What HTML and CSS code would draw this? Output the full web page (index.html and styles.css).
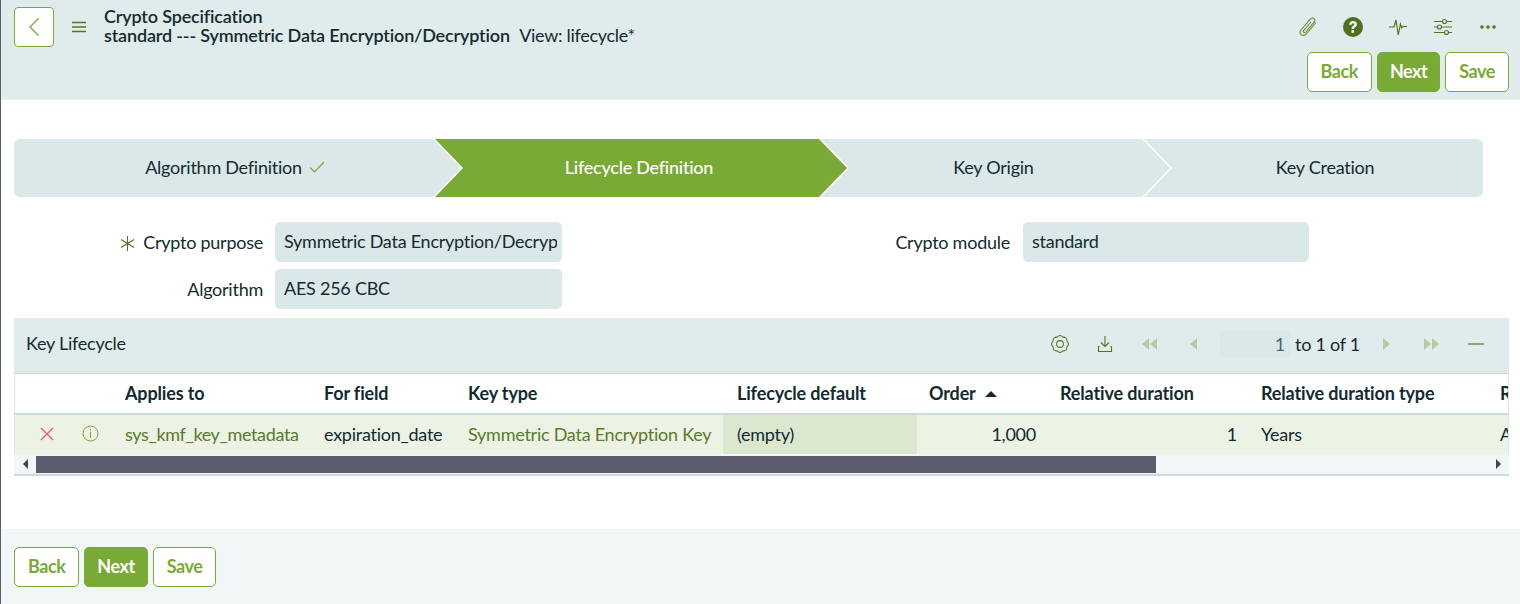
FILE: index.html
```html
<!DOCTYPE html>
<html lang="en">
<head>
    <meta charset="UTF-8">
    <meta name="viewport" content="width=device-width, initial-scale=1.0">
    <title>Crypto Specification</title>
    <link rel="stylesheet" href="styles.css">
</head>
<body>
    <header class="topbar">
        <div class="topbar-row">
            <button class="back-arrow" type="button">
                <svg width="12" height="20" viewBox="0 0 12 20"><path d="M10.5 1.5 2 10l8.500 8.500" fill="none" stroke="#7aaa36" stroke-width="1.300"/></svg>
            </button>
            <svg class="menu-icon" width="14" height="12" viewBox="0 0 14 12"><path d="M0 1.500h14M0 6h14M0 10.500h14" stroke="#55761f" stroke-width="1.300"/></svg>
            <div class="title">
                <div class="title-line">Crypto Specification</div>
                <div class="title-line">standard --- Symmetric Data Encryption/Decryption <span class="view-name">View: lifecycle*</span></div>
            </div>
            <div class="top-icons">
                <svg width="20" height="20" viewBox="0 0 20 20"><path d="M18 5.500 8.300 16.800c-1.500 1.800-3.700 2.100-5.100.9s-1.400-3.400.1-5.200L12.200 2.200c1.100-1.300 2.800-1.500 3.800-.6s1 2.500-.1 3.800L7.700 15c-.6.700-1.400.9-2 .4s-.5-1.300.1-2L13 5" fill="none" stroke="#6d8a3a" stroke-width="1.100"/></svg>
                <svg width="20" height="20" viewBox="0 0 20 20"><circle cx="10" cy="10" r="10" fill="#4f701c"/><path d="M6.200 7.800c0-2.300 1.700-3.700 3.900-3.700s3.800 1.300 3.800 3.200c0 2.700-2.900 2.700-2.900 4.700H8.600c0-3.300 2.700-3.300 2.700-4.700 0-.7-.5-1.100-1.300-1.100s-1.300.6-1.300 1.600zM8.500 13.300h2.500v2.500H8.500z" fill="#fff"/></svg>
                <svg width="20" height="20" viewBox="0 0 20 20"><path d="M1 10h5l2-7 2.200 15L12.500 7l1.300 4 1-1.500H19" fill="none" stroke="#55761f" stroke-width="1.200"/></svg>
                <svg width="20" height="18" viewBox="0 0 20 18"><g fill="none" stroke="#55761f" stroke-width="1.100"><path d="M1 3.500h8.500M13.500 3.500H19M1 9h3.500M8.500 9H19M1 14.500h10.500M15.500 14.500H19"/><circle cx="11.500" cy="3.500" r="2"/><circle cx="6.500" cy="9" r="2"/><circle cx="13.500" cy="14.500" r="2"/></g></svg>
                <svg width="20" height="4" viewBox="-2 0 20 4"><g fill="#55761f"><circle cx="2" cy="2" r="1.800"/><circle cx="8" cy="2" r="1.800"/><circle cx="14" cy="2" r="1.800"/></g></svg>
            </div>
        </div>
        <div class="actions actions-right">
            <button class="btn" type="button">Back</button>
            <button class="btn btn-primary" type="button">Next</button>
            <button class="btn" type="button">Save</button>
        </div>
    </header>

    <main class="content">
        <div class="steps">
            <div class="step step-first">Algorithm Definition
                <svg class="check" width="16" height="12" viewBox="0 0 16 12"><path d="M1 6.500 5.500 11 15 1" fill="none" stroke="#7aaa36" stroke-width="1.200"/></svg>
            </div>
            <div class="step step-active">Lifecycle Definition</div>
            <div class="step">Key Origin</div>
            <div class="step step-last">Key Creation</div>
        </div>

        <div class="form">
            <div class="form-col">
                <div class="form-group">
                    <label class="form-label">
                        <svg class="required" width="15" height="15" viewBox="0 0 15 15"><path d="M7.500 0v15M1 3.500l13 8M14 3.500l-13 8" stroke="#5f6b2c" stroke-width="1.100"/></svg>Crypto purpose</label>
                    <div class="field"><div class="field-text">Symmetric Data Encryption/Decryption</div></div>
                </div>
                <div class="form-group">
                    <label class="form-label">Algorithm</label>
                    <div class="field"><div class="field-text">AES 256 CBC</div></div>
                </div>
            </div>
            <div class="form-col form-col-right">
                <div class="form-group">
                    <label class="form-label">Crypto module</label>
                    <div class="field"><div class="field-text">standard</div></div>
                </div>
            </div>
        </div>

        <section class="list">
            <div class="list-bar">
                <div class="list-title">Key Lifecycle</div>
                <div class="list-tools">
                    <svg class="tool tool-gear" width="18" height="18" viewBox="1 1 16 16"><g fill="none" stroke="#55761f" stroke-width=".9"><path d="M15.100 6.470Q15.360 2.640 11.530 2.900Q9 0 6.470 2.900Q2.640 2.640 2.900 6.470Q0 9 2.900 11.530Q2.640 15.360 6.470 15.100Q9 18 11.530 15.100Q15.360 15.360 15.100 11.530Q18 9 15.100 6.470Z"/><circle cx="9" cy="9" r="3"/></g></svg>
                    <svg class="tool tool-save" width="16" height="18" viewBox="0 0 16 18"><g fill="none" stroke="#55761f" stroke-width="1.100"><path d="M8 1v10M4 7.500l4 4 4-4"/><path d="M2.500 11.500H1.500v5h13v-5h-1"/></g></svg>
                    <svg class="tool tool-first" width="17" height="12" viewBox="0 0 17 12"><path d="M8 0v12L1 6zM16 0v12L9 6z" fill="#b5cba6"/></svg>
                    <svg class="tool tool-prev" width="9" height="12" viewBox="0 0 9 12"><path d="M8 0v12L1 6z" fill="#b5cba6"/></svg>
                    <div class="page-box">1</div>
                    <div class="page-text">to 1 of 1</div>
                    <svg class="tool tool-next" width="9" height="12" viewBox="0 0 9 12"><path d="M1 0v12l7-6z" fill="#b5cba6"/></svg>
                    <svg class="tool tool-last" width="17" height="12" viewBox="0 0 17 12"><path d="M1 0v12l7-6zM9 0v12l7-6z" fill="#b5cba6"/></svg>
                    <svg class="tool tool-min" width="16" height="2" viewBox="0 0 16 2"><path d="M0 1h16" stroke="#55761f" stroke-width="1.200"/></svg>
                </div>
            </div>
            <div class="table-wrap">
                <table class="grid">
                    <colgroup>
                        <col class="c-x"><col class="c-info"><col class="c-applies"><col class="c-field"><col class="c-key">
                        <col class="c-default"><col class="c-order"><col class="c-dur"><col class="c-type"><col class="c-rest">
                    </colgroup>
                    <thead>
                        <tr>
                            <th></th>
                            <th></th>
                            <th>Applies to</th>
                            <th>For field</th>
                            <th>Key type</th>
                            <th class="pad-wide">Lifecycle default</th>
                            <th>Order <span class="sort-up"></span></th>
                            <th>Relative duration</th>
                            <th>Relative duration type</th>
                            <th>R</th>
                        </tr>
                    </thead>
                    <tbody>
                        <tr>
                            <td class="icon-cell icon-delete"><svg width="14" height="14" viewBox="0 0 14 14"><path d="M1 1l12 12M13 1 1 13" stroke="#f0566a" stroke-width="1.300"/></svg></td>
                            <td class="icon-cell"><svg width="17" height="17" viewBox="0 0 17 17"><circle cx="8.500" cy="8.500" r="7.500" fill="none" stroke="#7aaa36" stroke-width="1"/><path d="M8.500 4v1.500M8.500 7v6" stroke="#7aaa36" stroke-width="1.100"/></svg></td>
                            <td class="link link-tight">sys_kmf_key_metadata</td>
                            <td>expiration_date</td>
                            <td class="link">Symmetric Data Encryption Key</td>
                            <td class="pad-wide cell-empty">(empty)</td>
                            <td class="num">1,000</td>
                            <td class="num">1</td>
                            <td>Years</td>
                            <td>A</td>
                        </tr>
                    </tbody>
                </table>
            </div>
            <div class="scrollbar">
                <div class="scroll-btn"><div class="arrow-left"></div></div>
                <div class="scroll-thumb"></div>
                <div class="scroll-btn"><div class="arrow-right"></div></div>
            </div>
        </section>
    </main>

    <footer class="footer">
        <div class="actions">
            <button class="btn" type="button">Back</button>
            <button class="btn btn-primary" type="button">Next</button>
            <button class="btn" type="button">Save</button>
        </div>
    </footer>
</body>
</html>
```

FILE: styles.css
```css
html, body {
    height: 100%;
}

body {
    margin: 0;
    box-sizing: border-box;
    height: 604px;
    overflow: hidden;
    display: flex;
    flex-direction: column;
    border-left: 1px solid #5c5c6e;
    background: #fff;
    color: #132b30;
    font-family: Lato, "Open Sans", sans-serif;
    font-size: 18px;
    letter-spacing: -0.25px;
}

/* top bar */
.topbar {
    box-sizing: border-box;
    height: 100px;
    padding: 7px 11px 0 13px;
    background: #e0ebeb;
    border-bottom: 1px solid #e9f0f0;
}

.topbar-row {
    display: flex;
    align-items: flex-start;
    height: 40px;
}

.back-arrow {
    box-sizing: border-box;
    width: 40px;
    height: 40px;
    padding: 0;
    display: flex;
    align-items: center;
    justify-content: center;
    background: #fff;
    border: 1px solid #7aaa36;
    border-radius: 4px;
}

.menu-icon {
    margin: 14px 0 0 18px;
}

.title {
    margin: 0 0 0 18px;
    line-height: 19px;
    font-weight: 600;
    letter-spacing: -0.16px;
}

.title-line {
    white-space: nowrap;
}

.view-name {
    margin-left: 5px;
    font-weight: 400;
    letter-spacing: -0.3px;
}

.top-icons {
    margin-left: auto;
    height: 40px;
    display: flex;
    align-items: center;
    gap: 25px;
    padding-right: 11px;
}

.actions {
    display: flex;
    gap: 5px;
}

.actions-right {
    justify-content: flex-end;
    margin-top: 5px;
}

.btn {
    box-sizing: border-box;
    height: 40px;
    padding: 0 13px 2px;
    background: #fff;
    border: 1px solid #7aaa36;
    border-radius: 5px;
    color: #7aaa36;
    font-family: inherit;
    font-size: 18px;
    font-weight: 700;
    letter-spacing: -0.45px;
}

.btn-primary {
    padding: 0 12px 2px;
    background: #7aaa36;
    color: #fff;
}

/* main */
.content {
    padding: 39px 11px 0 13px;
}

.steps {
    display: flex;
    height: 58px;
    width: 1469px;
}

.step {
    position: relative;
    box-sizing: border-box;
    flex: none;
    display: flex;
    align-items: center;
    justify-content: center;
    gap: 6px;
    padding: 0 0 2px 24px;
    background: #dae8e9;
    width: 323px;
}

.step::before,
.step::after {
    content: "";
    position: absolute;
    top: 0;
    bottom: 0;
    z-index: 1;
}

.step::before {
    right: -29px;
    width: 30px;
    background: #fff;
    clip-path: polygon(0 0, 2px 0, 100% 50%, 2px 100%, 0 100%);
}

.step::after {
    right: -27px;
    width: 28px;
    background: #dae8e9;
    clip-path: polygon(0 0, 100% 50%, 0 100%);
}

.step-first {
    width: 420px;
    gap: 7px;
    padding-left: 22px;
    border-radius: 6px 0 0 6px;
}

.step-active {
    width: 386px;
    background: #7aaa36;
    color: #fff;
    font-weight: 500;
}

.step-active::after {
    background: #7aaa36;
}

.step-last {
    width: 340px;
    border-radius: 0 6px 6px 0;
}

.step-last::before,
.step-last::after {
    display: none;
}

.form {
    display: grid;
    grid-template-columns: 748px 747px;
    margin-top: 25px;
}

.form-group {
    display: grid;
    grid-template-columns: 249px 287px;
    column-gap: 12px;
    height: 40px;
    margin-bottom: 7px;
}

.form-col-right .form-group {
    grid-template-columns: 248px 286px;
    column-gap: 13px;
}

.form-label {
    line-height: 41px;
    text-align: right;
}

.required {
    margin-right: 8px;
    vertical-align: -2px;
}

.field {
    box-sizing: border-box;
    height: 40px;
    padding: 0 5px 0 9px;
    line-height: 38px;
    background: #dae8e9;
    border-radius: 5px;
}

.field-text {
    white-space: nowrap;
    overflow: hidden;
}

/* related list */
.list {
    margin-top: 2px;
    border-bottom: 2px solid #c9dada;
}

.list-bar {
    box-sizing: border-box;
    height: 56px;
    display: flex;
    align-items: center;
    padding: 0 0 4px 12px;
    background: #e0ebeb;
    border-bottom: 1px solid #c9dada;
}

.list-title {
    margin-bottom: 2px;
}

.list-tools {
    margin-left: auto;
    display: flex;
    align-items: center;
    width: 458px;
    height: 100%;
}

.tool {
    flex: none;
}

.tool-gear { margin-left: 0; }
.tool-save { margin-left: 28px; }
.tool-first { margin-left: 28px; }
.tool-prev { margin-left: 31px; }
.tool-next { margin-left: 22px; }
.tool-last { margin-left: 32px; }
.tool-min { margin-left: 28px; }

.page-box {
    box-sizing: border-box;
    width: 71px;
    height: 28px;
    margin-left: 22px;
    padding-right: 6px;
    line-height: 29px;
    text-align: right;
    color: #4d6468;
    background: #dae8e9;
    border-radius: 4px;
}

.page-text {
    margin-left: 4px;
    white-space: nowrap;
}

.table-wrap {
    overflow: hidden;
    border-left: 1px solid #dbe6e6;
    border-right: 1px solid #dbe6e6;
}

.grid {
    table-layout: fixed;
    border-collapse: collapse;
    width: 1600px;
}

.c-x { width: 53px; }
.c-info { width: 45px; }
.c-applies { width: 199px; }
.c-field { width: 144px; }
.c-key { width: 267px; }
.c-default { width: 194px; }
.c-order { width: 131px; }
.c-dur { width: 201px; }
.c-type { width: 239px; }
.c-rest { width: 127px; }

.grid th,
.grid td {
    box-sizing: border-box;
    padding: 0 12px;
    text-align: left;
    white-space: nowrap;
    overflow: hidden;
}

.grid th {
    height: 40px;
    padding-bottom: 1px;
    font-weight: 700;
    letter-spacing: -0.15px;
    border-bottom: 2px solid #c9dada;
}

.grid td {
    height: 40px;
    padding-bottom: 2px;
    background: #ecf3e5;
}

.grid .pad-wide {
    padding-left: 14px;
}

.grid .cell-empty {
    background: #dbe8cf;
}

.grid .num {
    text-align: right;
}

.grid .icon-cell {
    padding: 0;
    text-align: center;
}

.grid .icon-delete {
    padding-left: 11px;
}

.icon-cell svg {
    display: block;
    margin: 0 auto 2px;
}

.link {
    color: #5a7a2c;
}

.link-tight {
    letter-spacing: -0.35px;
}

.sort-up {
    display: inline-block;
    margin: 0 0 3px 5px;
    border-left: 6px solid transparent;
    border-right: 6px solid transparent;
    border-bottom: 6px solid #132b30;
}

.scrollbar {
    display: flex;
    align-items: flex-end;
    height: 20px;
    padding-bottom: 1px;
    box-sizing: border-box;
    background: #f1f6f6;
}

.scroll-btn {
    align-self: center;
    width: 22px;
    display: flex;
    justify-content: center;
    flex: none;
}

.scroll-btn:last-child {
    margin-left: auto;
}

.scroll-thumb {
    width: 1120px;
    height: 17px;
    background: #5c5c6e;
}

.arrow-left {
    border-top: 5px solid transparent;
    border-bottom: 5px solid transparent;
    border-right: 5px solid #444;
}

.arrow-right {
    border-top: 5px solid transparent;
    border-bottom: 5px solid transparent;
    border-left: 5px solid #444;
}

.footer {
    margin-top: auto;
    box-sizing: border-box;
    height: 75px;
    padding: 18px 0 0 13px;
    background: #f1f6f6;
}
```
